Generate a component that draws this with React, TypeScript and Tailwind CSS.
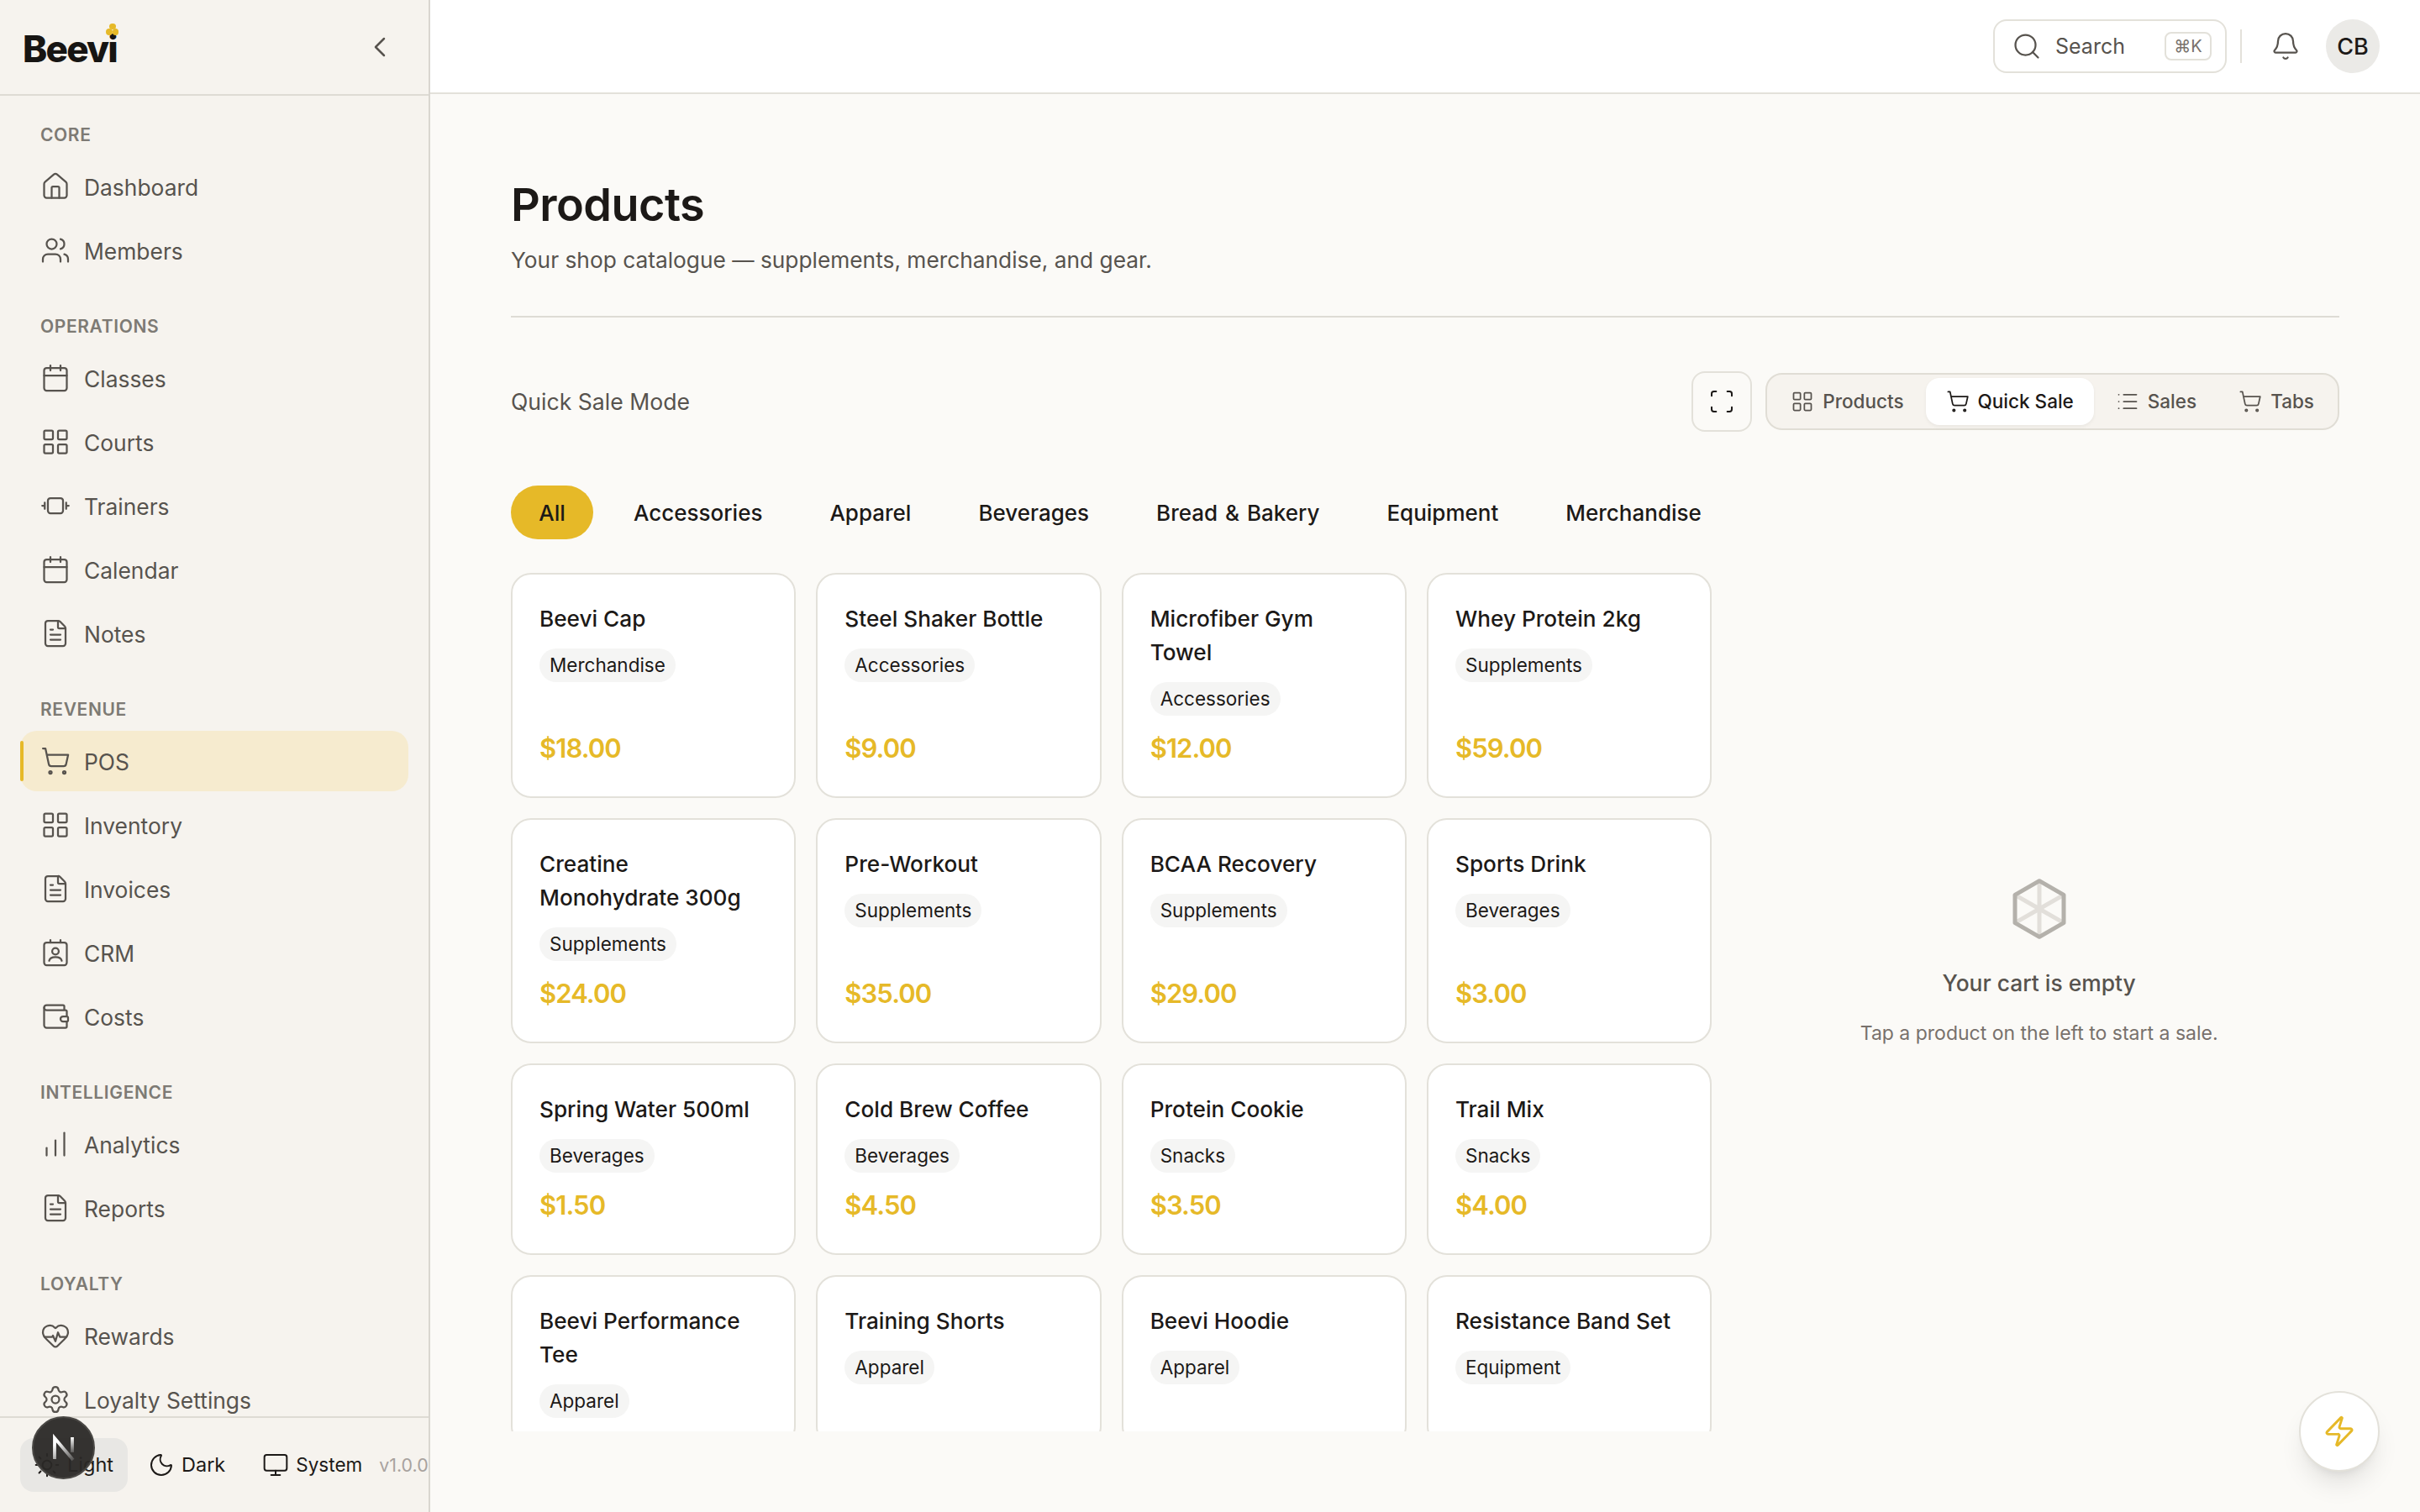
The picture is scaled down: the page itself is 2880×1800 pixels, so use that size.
import {
  Bell,
  Calendar,
  ChartNoAxesColumnIncreasing,
  ChevronLeft,
  FileText,
  HeartPulse,
  House,
  LayoutGrid,
  List,
  Monitor,
  Moon,
  Scan,
  Search,
  Settings,
  ShoppingCart,
  Sun,
  Users,
  Wallet,
  Zap,
} from "lucide-react";
import type { ComponentType } from "react";

type IconType = ComponentType<{ size?: number; strokeWidth?: number; className?: string }>;

function DumbbellIcon({ size = 18, strokeWidth = 1.5 }: { size?: number; strokeWidth?: number }) {
  return (
    <svg width={size} height={size} viewBox="0 0 24 24" fill="none" stroke="currentColor" strokeWidth={strokeWidth} strokeLinecap="round" strokeLinejoin="round">
      <rect x="6" y="6" width="12" height="12" rx="2" />
      <path d="M3.5 9.5v5M20.5 9.5v5M1.5 12h2M20.5 12h2" />
    </svg>
  );
}

function ContactIcon({ size = 18, strokeWidth = 1.5 }: { size?: number; strokeWidth?: number }) {
  return (
    <svg width={size} height={size} viewBox="0 0 24 24" fill="none" stroke="currentColor" strokeWidth={strokeWidth} strokeLinecap="round" strokeLinejoin="round">
      <path d="M8 2v2M16 2v2" />
      <rect x="3" y="4" width="18" height="18" rx="2" />
      <circle cx="12" cy="11" r="2.6" />
      <path d="M7 18.5c.4-2 2.4-3 5-3s4.600 1 5 3" />
    </svg>
  );
}

const navGroups: { label: string; items: { name: string; icon: IconType; active?: boolean }[] }[] = [
  {
    label: "Core",
    items: [
      { name: "Dashboard", icon: House },
      { name: "Members", icon: Users },
    ],
  },
  {
    label: "Operations",
    items: [
      { name: "Classes", icon: Calendar },
      { name: "Courts", icon: LayoutGrid },
      { name: "Trainers", icon: DumbbellIcon },
      { name: "Calendar", icon: Calendar },
      { name: "Notes", icon: FileText },
    ],
  },
  {
    label: "Revenue",
    items: [
      { name: "POS", icon: ShoppingCart, active: true },
      { name: "Inventory", icon: LayoutGrid },
      { name: "Invoices", icon: FileText },
      { name: "CRM", icon: ContactIcon },
      { name: "Costs", icon: Wallet },
    ],
  },
  {
    label: "Intelligence",
    items: [
      { name: "Analytics", icon: ChartNoAxesColumnIncreasing },
      { name: "Reports", icon: FileText },
    ],
  },
  {
    label: "Loyalty",
    items: [
      { name: "Rewards", icon: HeartPulse },
      { name: "Loyalty Settings", icon: Settings },
    ],
  },
];

const categories = ["All", "Accessories", "Apparel", "Beverages", "Bread & Bakery", "Equipment", "Merchandise"];

// last row runs under the fold, its prices are never on screen
const products: { name: string; category: string; price?: string }[] = [
  { name: "Beevi Cap", category: "Merchandise", price: "$18.00" },
  { name: "Steel Shaker Bottle", category: "Accessories", price: "$9.00" },
  { name: "Microfiber Gym Towel", category: "Accessories", price: "$12.00" },
  { name: "Whey Protein 2kg", category: "Supplements", price: "$59.00" },
  { name: "Creatine Monohydrate 300g", category: "Supplements", price: "$24.00" },
  { name: "Pre-Workout", category: "Supplements", price: "$35.00" },
  { name: "BCAA Recovery", category: "Supplements", price: "$29.00" },
  { name: "Sports Drink", category: "Beverages", price: "$3.00" },
  { name: "Spring Water 500ml", category: "Beverages", price: "$1.50" },
  { name: "Cold Brew Coffee", category: "Beverages", price: "$4.50" },
  { name: "Protein Cookie", category: "Snacks", price: "$3.50" },
  { name: "Trail Mix", category: "Snacks", price: "$4.00" },
  { name: "Beevi Performance Tee", category: "Apparel" },
  { name: "Training Shorts", category: "Apparel" },
  { name: "Beevi Hoodie", category: "Apparel" },
  { name: "Resistance Band Set", category: "Equipment" },
];

const tabs: { name: string; icon: IconType; active?: boolean }[] = [
  { name: "Products", icon: LayoutGrid },
  { name: "Quick Sale", icon: ShoppingCart, active: true },
  { name: "Sales", icon: List },
  { name: "Tabs", icon: ShoppingCart },
];

function Sidebar() {
  return (
    <aside className="flex h-full w-64 shrink-0 flex-col border-r border-[#d9d6d0] bg-[#f6f3ee]">
      <div className="flex h-[57px] shrink-0 items-center justify-between border-b border-[#dedbd4] pr-[19px] pl-[13.500px]">
        <div className="relative h-[26px] w-[58px]">
          <span className="absolute bottom-[-1px] left-0 text-[22px] leading-[26px] font-extrabold tracking-[-0.04em] text-[#171513]">Beevi</span>
          <span className="absolute top-[-1px] left-[51.700px] h-[3.600px] w-[3.600px] rounded-full bg-[#e6b928]" />
          <span className="absolute top-[2.200px] left-[49.700px] h-[3.600px] w-[3.600px] rounded-full bg-[#e6b928]" />
          <span className="absolute top-[2.200px] left-[53.500px] h-[3.600px] w-[3.600px] rounded-full bg-[#e6b928]" />
        </div>
        <ChevronLeft size={20} strokeWidth={1.5} className="text-[#57534e]" />
      </div>
      <nav className="min-h-0 flex-1 overflow-hidden pt-[15px]">
        {navGroups.map((group) => (
          <div key={group.label} className="mb-[19px] px-3">
            <div className="mb-[5px] h-4 px-3 text-[10.500px] leading-[17px] font-semibold tracking-[0.03em] text-[#7d7a74] uppercase">{group.label}</div>
            <div className="flex flex-col gap-0.5">
              {group.items.map((item) => (
                <div
                  key={item.name}
                  className={`relative flex h-9 items-center gap-2 rounded-[10px] px-3 text-[13.200px] text-[#57534e] ${item.active ? "bg-[#f6ebcf]" : ""}`}
                >
                  {item.active && <span className="absolute top-1.5 left-0 h-6 w-0.5 rounded-full bg-[#e6b928]" />}
                  <item.icon size={18} strokeWidth={1.5} />
                  <span className="pt-[1.500px]">{item.name}</span>
                </div>
              ))}
            </div>
          </div>
        ))}
      </nav>
      <div className="flex shrink-0 items-center gap-1 overflow-hidden border-t border-[#dedbd4] py-3 pl-3 text-[11.750px] text-[#1c1917]">
        <div className="flex h-8 w-16 shrink-0 items-center gap-1 rounded-lg bg-[#e8e7e4] px-2">
          <Sun size={16} strokeWidth={1.5} />
          <span>Light</span>
        </div>
        <div className="flex h-8 shrink-0 items-center gap-1 pr-2.5 pl-2">
          <Moon size={16} strokeWidth={1.5} />
          <span>Dark</span>
        </div>
        <div className="flex h-8 shrink-0 items-center gap-1 pr-2 pl-2">
          <Monitor size={16} strokeWidth={1.5} />
          <span className="text-[11.250px]">System</span>
        </div>
        <span className="-ml-0.5 text-[10.700px] whitespace-nowrap text-[#a8a29e]">v1.0.0</span>
      </div>
    </aside>
  );
}

function TopBar() {
  return (
    <header className="flex h-14 shrink-0 items-center justify-end border-b border-[#e3e1da] bg-white px-6">
      <div className="flex h-8 w-[139px] items-center rounded-lg border border-[#e3e1da] pr-2 pl-3 text-[12.500px] text-[#57534e]">
        <Search size={18} strokeWidth={1.5} className="-ml-0.5" />
        <span className="ml-2 pt-px">Search</span>
        <span className="ml-auto flex h-[17px] w-7 items-center justify-center rounded border border-[#e3e1da] text-[10px] text-[#78716c]">⌘K</span>
      </div>
      <span className="mr-[17px] ml-2 h-5 w-px bg-[#e3e1da]" />
      <Bell size={18} strokeWidth={1.5} className="text-[#57534e]" />
      <div className="ml-[15px] flex h-8 w-8 items-center justify-center rounded-full bg-[#ebeae7] pt-px text-[13.500px] font-medium text-[#1c1917]">CB</div>
    </header>
  );
}

function ProductCard({ product }: { product: (typeof products)[number] }) {
  return (
    <div className="flex flex-col rounded-xl border border-[#e3e1da] bg-white p-4">
      <div className="pt-[0.500px] text-[13.100px] leading-5 font-medium text-[#1c1917]">{product.name}</div>
      <div className="mt-[7.500px] self-start rounded-full bg-[#f5f5f4] px-1.5 text-[11.250px] leading-5 text-[#1c1917]">{product.category}</div>
      {product.price && (
        <div className="mt-auto translate-y-[1.500px] pt-1 text-[15.500px] leading-7 font-semibold tracking-[-0.03em] text-[#e6b928]">{product.price}</div>
      )}
    </div>
  );
}

export default function App() {
  return (
    <div className="relative flex h-[900px] w-[1440px] overflow-hidden bg-[#fbfaf7] [font-family:Inter,sans-serif] [zoom:2]">
      <Sidebar />
      <main className="flex h-full min-w-0 flex-1 flex-col">
        <TopBar />
        <div className="flex min-h-0 flex-1 flex-col px-12 pt-12 pb-12">
          <div className="border-b border-[#dedcd5] pb-[23px]">
            <h1 className="text-[27px] leading-9 font-semibold tracking-[-0.01em] text-[#1c1917]">Products</h1>
            <p className="mt-[5px] text-[13.150px] leading-5 text-[#57534e]">Your shop catalogue — supplements, merchandise, and gear.</p>
          </div>
          <div className="mt-8 flex h-9 shrink-0 items-center justify-between">
            <span className="pt-px text-[13.300px] text-[#57534e]">Quick Sale Mode</span>
            <div className="flex items-center gap-2">
              <div className="flex h-9 w-9 items-center justify-center rounded-lg border border-[#e3e1da] bg-[#fbfaf7] text-[#1c1917]">
                <Scan size={16} strokeWidth={1.5} />
              </div>
              <div className="flex h-[34px] items-center gap-px rounded-[10px] border border-[#e0ddd5] bg-[#f6f3ee] p-0.5 text-[11.250px] font-medium text-[#57534e]">
                {tabs.map((tab) => (
                  <div
                    key={tab.name}
                    className={`flex h-7 items-center gap-[5px] rounded-lg px-3 ${tab.active ? "bg-white text-[#1c1917] shadow-xs" : ""}`}
                  >
                    <tab.icon size={14} strokeWidth={1.5} />
                    <span>{tab.name}</span>
                  </div>
                ))}
              </div>
            </div>
          </div>
          <div className="mt-8 grid min-h-0 flex-1 grid-cols-[minmax(0,2fr)_minmax(0,1fr)] gap-4">
            <div className="flex min-h-0 flex-col">
              <div className="flex shrink-0 gap-2">
                {categories.map((category, index) => (
                  <div
                    key={category}
                    className={`flex h-8 shrink-0 items-center justify-center rounded-full text-[13px] font-medium whitespace-nowrap text-[#1c1917] [word-spacing:1px] ${index === 0 ? "w-[49px] bg-[#e6b928]" : "px-4"}`}
                  >
                    {category}
                  </div>
                ))}
              </div>
              <div className="mt-5 min-h-0 flex-1 overflow-hidden">
                <div className="grid grid-cols-4 gap-3">
                  {products.map((product) => (
                    <ProductCard key={product.name} product={product} />
                  ))}
                </div>
              </div>
            </div>
            <div className="flex flex-col items-center pt-[232px] text-center">
              <svg width="40" height="40" viewBox="0 0 24 24" fill="none" strokeWidth="1.5" strokeLinejoin="round">
                <path d="M12 12V2M12 12V22M12 12L3.300 7M12 12L20.700 7M12 12L3.300 17M12 12L20.700 17" stroke="#e2dfda" />
                <path d="M12 2L20.700 7V17L12 22L3.300 17V7Z" stroke="#b4b1ab" />
              </svg>
              <div className="mt-3.5 text-[13.200px] leading-5 font-medium text-[#57534e]">Your cart is empty</div>
              <div className="mt-3 text-[11.500px] leading-4 text-[#78716c]">Tap a product on the left to start a sale.</div>
            </div>
          </div>
        </div>
      </main>

      <div className="absolute right-6 bottom-6 flex h-12 w-12 items-center justify-center rounded-full border border-[#e3e1da] bg-white shadow-lg">
        <Zap size={20} strokeWidth={1.75} className="text-[#e6b928]" />
      </div>

      <div className="absolute bottom-[19.500px] left-[19px] flex h-[37.500px] w-[37.500px] items-center justify-center rounded-full border border-[#4a4845] bg-[#2a2826]/95">
        <svg width="17" height="17" viewBox="0 0 17 17" fill="none">
          <defs>
            <linearGradient id="next-n" x1="6" y1="4" x2="15" y2="15" gradientUnits="userSpaceOnUse">
              <stop stopColor="#fff" />
              <stop offset="1" stopColor="#fff" stopOpacity="0.15" />
            </linearGradient>
            <linearGradient id="next-n-stem" x1="13.500" y1="2" x2="13.500" y2="11" gradientUnits="userSpaceOnUse">
              <stop stopColor="#fff" />
              <stop offset="1" stopColor="#fff" stopOpacity="0.2" />
            </linearGradient>
          </defs>
          <path d="M3 15V2.500L14 15.500" stroke="url(#next-n)" strokeWidth="1.900" />
          <path d="M13.500 2V11" stroke="url(#next-n-stem)" strokeWidth="1.900" />
        </svg>
      </div>
    </div>
  );
}
